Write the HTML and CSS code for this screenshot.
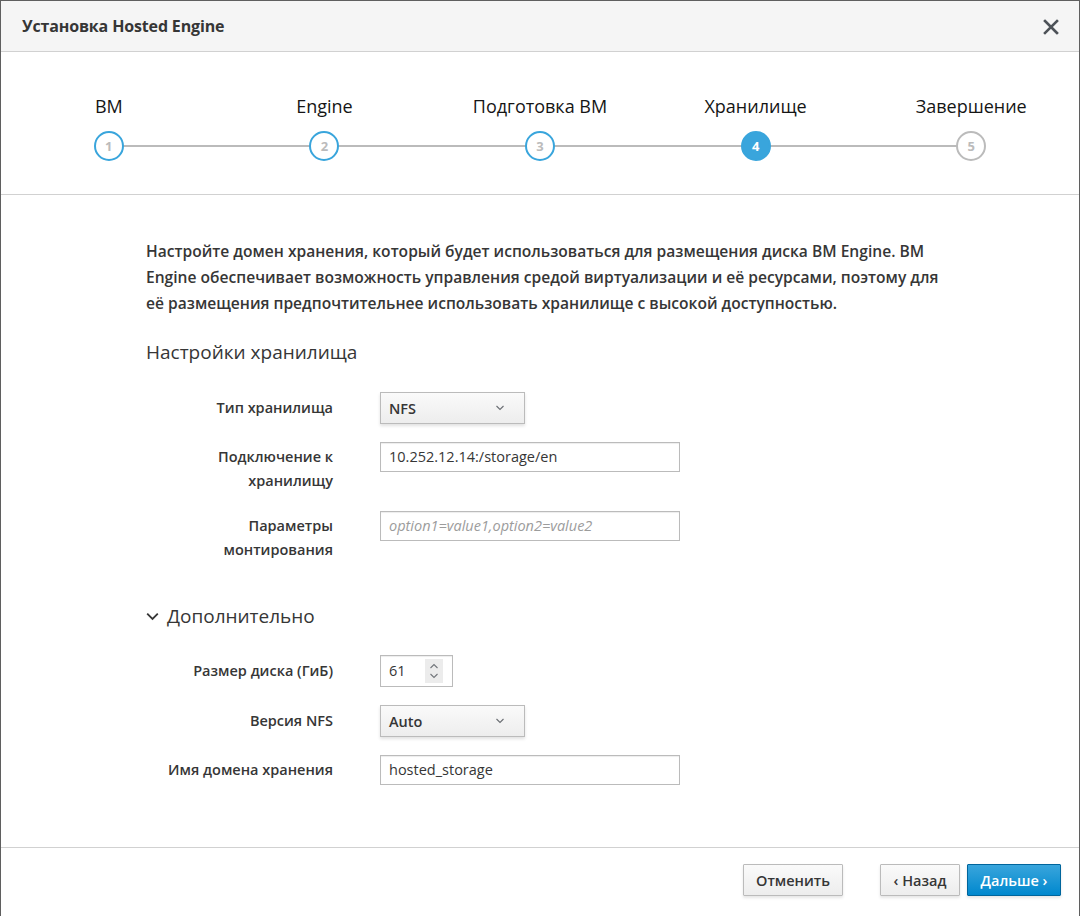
FILE: index.html
```html
<!DOCTYPE html>
<html lang="ru">
<head>
<meta charset="utf-8">
<title>Установка Hosted Engine</title>
<link rel="stylesheet" href="styles.css">
</head>
<body>
<div class="modal">
  <header class="modal-header">
    <h1 class="modal-title">Установка Hosted Engine</h1>
    <button class="close" aria-label="Закрыть">
      <svg width="16" height="16" viewBox="0 0 16 16"><path d="M2 2 L14 14 M14 2 L2 14" stroke="#4d5258" stroke-width="2.6" stroke-linecap="square" fill="none"/></svg>
    </button>
  </header>

  <ol class="steps">
    <li class="step done"><span class="step-label">ВМ</span><span class="step-circle">1</span></li>
    <li class="step done"><span class="step-label">Engine</span><span class="step-circle">2</span></li>
    <li class="step done"><span class="step-label">Подготовка ВМ</span><span class="step-circle">3</span></li>
    <li class="step active"><span class="step-label">Хранилище</span><span class="step-circle">4</span></li>
    <li class="step future"><span class="step-label">Завершение</span><span class="step-circle">5</span></li>
  </ol>

  <main class="modal-body">
    <p class="intro">Настройте домен хранения, который будет использоваться для размещения диска ВМ Engine. ВМ Engine обеспечивает возможность управления средой виртуализации и её ресурсами, поэтому для её размещения предпочтительнее использовать хранилище с высокой доступностью.</p>

    <h2 class="section-title">Настройки хранилища</h2>

    <div class="form">
      <div class="row row-select">
        <label class="label">Тип хранилища</label>
        <div class="select"><span class="select-value">NFS</span>
          <svg class="caret" width="10" height="6" viewBox="0 0 10 6"><path d="M1.5 1 L5 4.5 L8.5 1" stroke="#6a6e73" stroke-width="1.1" fill="none"/></svg>
        </div>
      </div>
      <div class="row">
        <label class="label">Подключение к хранилищу</label>
        <div class="input wide">10.252.12.14:/storage/en</div>
      </div>
      <div class="row">
        <label class="label">Параметры монтирования</label>
        <div class="input wide placeholder">option1=value1,option2=value2</div>
      </div>
    </div>

    <h2 class="section-title advanced">
      <svg class="chevron" width="13" height="9" viewBox="0 0 13 9"><path d="M1.2 1.6 L6.5 6.9 L11.8 1.6" stroke="#363636" stroke-width="1.8" fill="none"/></svg>
      Дополнительно
    </h2>

    <div class="form form-advanced">
      <div class="row row-select">
        <label class="label">Размер диска (ГиБ)</label>
        <div class="input number"><span>61</span>
          <span class="spinner">
            <svg width="10" height="22" viewBox="0 0 10 22"><path d="M1.5 8 L5 4.5 L8.5 8" stroke="#72767b" stroke-width="1.1" fill="none"/><path d="M1.5 14 L5 17.5 L8.5 14" stroke="#72767b" stroke-width="1.1" fill="none"/></svg>
          </span>
        </div>
      </div>
      <div class="row row-select">
        <label class="label">Версия NFS</label>
        <div class="select"><span class="select-value">Auto</span>
          <svg class="caret" width="10" height="6" viewBox="0 0 10 6"><path d="M1.5 1 L5 4.5 L8.5 1" stroke="#6a6e73" stroke-width="1.1" fill="none"/></svg>
        </div>
      </div>
      <div class="row">
        <label class="label">Имя домена хранения</label>
        <div class="input wide">hosted_storage</div>
      </div>
    </div>
  </main>

  <footer class="modal-footer">
    <button class="btn">Отменить</button>
    <div class="nav-buttons">
      <button class="btn">‹ Назад</button>
      <button class="btn btn-primary">Дальше ›</button>
    </div>
  </footer>
</div>
</body>
</html>
```
FILE: styles.css
```css
* { box-sizing: border-box; }
html, body { margin: 0; padding: 0; }
body {
  font-family: "Open Sans", "Noto Sans", sans-serif;
  color: #363636;
  background: #fff;
  width: 1080px;
  height: 916px;
  overflow: hidden;
}
.modal {
  width: 1080px;
  height: 918px;
  border: 1px solid #5f5f5f;
  display: flex;
  flex-direction: column;
  background: #fff;
}
.modal-header {
  height: 51px;
  flex: none;
  background: #f5f5f5;
  border-bottom: 1px solid #d1d1d1;
  display: flex;
  align-items: center;
  justify-content: space-between;
  padding: 0 20px 0 21px;
}
.modal-title {
  margin: 0;
  font-size: 16px;
  font-weight: 700;
  color: #363636;
  letter-spacing: -0.15px;
}
.close {
  border: 0;
  background: none;
  padding: 0;
  width: 16px;
  height: 16px;
  display: flex;
  margin-top: 1px;
}
.steps {
  list-style: none;
  margin: 0;
  padding: 42px 0 33px;
  display: grid;
  grid-template-columns: repeat(5, 1fr);
  border-bottom: 1px solid #d1d1d1;
  flex: none;
}
.step {
  position: relative;
  display: flex;
  flex-direction: column;
  align-items: center;
  gap: 13px;
}
.step::before, .step::after {
  content: "";
  position: absolute;
  bottom: 14px;
  height: 2px;
  background: #bbb;
  width: 50%;
}
.step::before { left: 0; }
.step::after { right: 0; }
.step:first-child::before, .step:last-child::after { display: none; }
.step-label {
  font-size: 18px;
  line-height: 24px;
  color: #151515;
  white-space: nowrap;
}
.step-circle {
  position: relative;
  z-index: 1;
  width: 30px;
  height: 30px;
  border-radius: 50%;
  border: 2px solid #39a5dc;
  background: #fff;
  color: #bbb;
  font-size: 13px;
  font-weight: 700;
  display: flex;
  align-items: center;
  justify-content: center;
}
.step.active .step-circle { background: #39a5dc; color: #fff; }
.step.future .step-circle { border-color: #bbb; color: #bbb; }

.modal-body {
  flex: 1;
  padding: 43px 0 0 145px;
}
.intro {
  margin: 0;
  width: 800px;
  font-size: 15.6px;
  line-height: 26px;
  font-weight: 600;
  color: #363636;
}
.section-title {
  margin: 23px 0 0;
  font-size: 19px;
  line-height: 26px;
  font-weight: 400;
  color: #363636;
  display: flex;
  align-items: center;
  gap: 8px;
}
.section-title.advanced { margin-top: 41px; }
.chevron { margin-top: 1px; }
.form {
  margin-top: 27px;
  display: flex;
  flex-direction: column;
  gap: 18px;
}
.form-advanced { margin-top: 26px; }
.row {
  display: grid;
  grid-template-columns: 187px auto;
  column-gap: 47px;
  align-items: start;
}
.label {
  text-align: right;
  font-size: 14.5px;
  font-weight: 600;
  line-height: 24px;
  padding-top: 3px;
  color: #363636;
}
.row-select .label { padding-top: 4px; }
.select {
  width: 145px;
  height: 32px;
  border: 1px solid #bbb;
  background: linear-gradient(#fafafa, #ededed);
  box-shadow: 0 2px 3px rgba(3,3,3,.12);
  display: flex;
  align-items: center;
  justify-content: space-between;
  padding: 0 19px 0 8px;
}
.select-value {
  font-size: 14.5px;
  font-weight: 600;
  color: #363636;
}
.input {
  height: 30px;
  border: 1px solid #bbb;
  background: #fff;
  box-shadow: inset 0 1px 1px rgba(3,3,3,.075);
  padding: 0 8px;
  font-size: 14.5px;
  line-height: 28px;
  color: #363636;
  white-space: nowrap;
}
.input.wide { width: 300px; }
.input.placeholder { color: #9c9c9c; font-style: italic; }
.input.number {
  width: 73px;
  height: 32px;
  line-height: 30px;
  display: flex;
  justify-content: space-between;
  align-items: center;
  padding-right: 9px;
}
.spinner {
  width: 18px;
  height: 24px;
  background: #ececec;
  display: flex;
  align-items: center;
  justify-content: center;
}

.modal-footer {
  flex: none;
  border-top: 1px solid #d1d1d1;
  padding: 16px 18px 21px 0;
  display: flex;
  justify-content: flex-end;
  align-items: center;
  gap: 37px;
  height: 70px;
}
.nav-buttons { display: flex; gap: 7px; }
.btn {
  height: 32px;
  padding: 0 12px;
  font-family: inherit;
  font-size: 14.5px;
  font-weight: 600;
  color: #363636;
  border: 1px solid #bbb;
  background: linear-gradient(#fafafa, #ededed);
  box-shadow: 0 2px 3px rgba(3,3,3,.1);
  border-radius: 1px;
}
.btn:first-child { min-width: 99px; }
.nav-buttons .btn:first-child { min-width: 80px; }
.btn-primary {
  color: #fff;
  border-color: #00659c;
  background: linear-gradient(#39a5dc, #0088ce);
  min-width: 94px;
}
```
